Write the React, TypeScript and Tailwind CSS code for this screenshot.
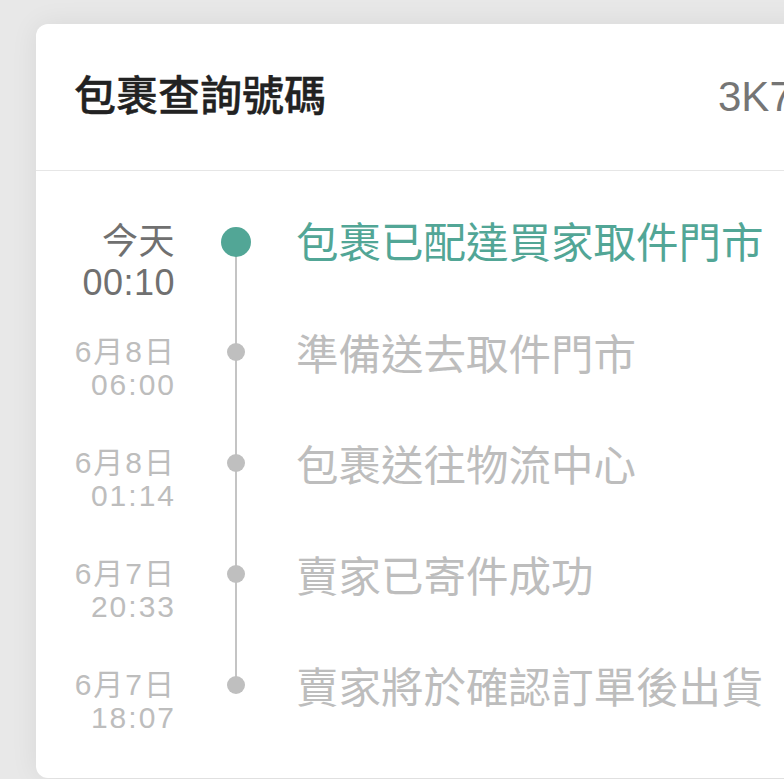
import React from "react";

interface Step {
  date: string;
  time: string;
  label: string;
}

const font = {
  fontFamily: '"Liberation Sans", "Noto Sans CJK TC", sans-serif',
};

const steps: Step[] = [
  { date: "6月8日", time: "06:00", label: "準備送去取件門市" },
  { date: "6月8日", time: "01:14", label: "包裹送往物流中心" },
  { date: "6月7日", time: "20:33", label: "賣家已寄件成功" },
  { date: "6月7日", time: "18:07", label: "賣家將於確認訂單後出貨" },
];

export default function App() {
  return (
    <div
      className="w-[784px] h-[779px] bg-[#e8e8e8] overflow-hidden pt-[24px] pl-[36px]"
      style={font}
    >
      <div className="w-[900px] h-[754px] bg-white rounded-[12px] shadow-[0_0_28px_rgba(0,0,0,0.07)]">
        {/* Header */}
        <div className="h-[147px] flex items-center pl-[38px] gap-[392px] border-b border-[#e6e6e6] whitespace-nowrap">
          <h1 className="text-[42px] font-medium text-[#222222] leading-none [-webkit-text-stroke:0.4px_#222222]">
            包裹查詢號碼
          </h1>
          <span className="text-[42px] text-[#757575] leading-none">
            3K72918465
          </span>
        </div>

        {/* Timeline */}
        <div className="relative pt-[51px] flex flex-col gap-[45px]">
          <div className="absolute left-[199px] top-[70px] w-[2px] h-[443px] bg-[#c4c4c4]" />

          {/* latest */}
          <div className="flex items-start mb-[-13px]">
            <div className="w-[139px] text-right text-[#707070] text-[36px] tracking-[0.5px]">
              <div className="leading-[40px]">今天</div>
              <div className="leading-[41px]">00:10</div>
            </div>
            <div className="w-[121px] h-[40px] flex items-center justify-center">
              <div className="relative w-[30px] h-[30px] rounded-full bg-[#52a696]" />
            </div>
            <div className="text-[42.5px] leading-[40px] mt-[2px] text-[#52a696] whitespace-nowrap">
              包裹已配達買家取件門市
            </div>
          </div>

          {steps.map((s) => (
            <div key={s.time} className="flex items-start">
              <div className="w-[140px] text-right text-[#bdbdbd] text-[30px] tracking-[2px] leading-[33px]">
                <div>{s.date}</div>
                <div>{s.time}</div>
              </div>
              <div className="w-[120px] h-[33px] flex items-center justify-center">
                <div className="relative w-[18px] h-[18px] rounded-full bg-[#bfbfbf]" />
              </div>
              <div className="text-[42.5px] leading-[33px] mt-[4px] text-[#bdbdbd] whitespace-nowrap">
                {s.label}
              </div>
            </div>
          ))}
        </div>
      </div>
    </div>
  );
}
